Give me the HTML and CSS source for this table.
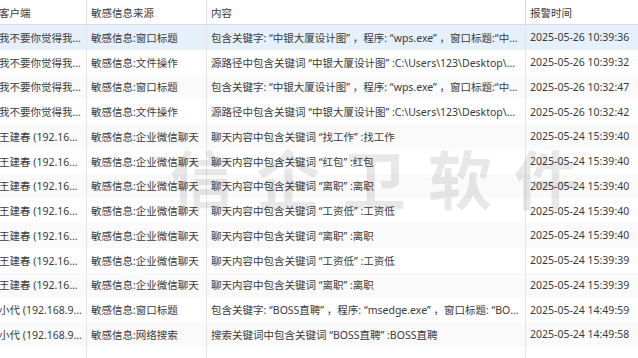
FILE: index.html
```html
<!DOCTYPE html>
<html lang="zh-CN">
<head>
  <meta charset="UTF-8">
  <meta name="viewport" content="width=device-width, initial-scale=1.0">
  <title>报警记录</title>
  <link rel="stylesheet" href="styles.css">
</head>
<body>
  <div id="kontener">
    <table id="lista">
      <colgroup>
        <col class="k-klient">
        <col class="k-zrodlo">
        <col class="k-tresc">
        <col class="k-czas">
      </colgroup>
      <thead>
        <tr>
          <th>客户端</th>
          <th>敏感信息来源</th>
          <th>内容</th>
          <th>报警时间</th>
        </tr>
      </thead>
      <tbody>
        <tr class="wybrany">
          <td>我不要你觉得我要我觉得</td>
          <td>敏感信息:窗口标题</td>
          <td>包含关键字: “中银大厦设计图” ，程序: “wps.exe” ，窗口标题:“中银大厦设计图.docx”</td>
          <td>2025-05-26 10:39:36</td>
        </tr>
        <tr>
          <td>我不要你觉得我要我觉得</td>
          <td>敏感信息:文件操作</td>
          <td>源路径中包含关键词 “中银大厦设计图” :C:\Users\123\Desktop\中银大厦设计图.docx</td>
          <td>2025-05-26 10:39:32</td>
        </tr>
        <tr>
          <td>我不要你觉得我要我觉得</td>
          <td>敏感信息:窗口标题</td>
          <td>包含关键字: “中银大厦设计图” ，程序: “wps.exe” ，窗口标题:“中银大厦设计图.docx”</td>
          <td>2025-05-26 10:32:47</td>
        </tr>
        <tr>
          <td>我不要你觉得我要我觉得</td>
          <td>敏感信息:文件操作</td>
          <td>源路径中包含关键词 “中银大厦设计图” :C:\Users\123\Desktop\中银大厦设计图.docx</td>
          <td>2025-05-26 10:32:42</td>
        </tr>
        <tr>
          <td>王建春 (192.168.1.25)</td>
          <td>敏感信息:企业微信聊天</td>
          <td>聊天内容中包含关键词 “找工作” :找工作</td>
          <td>2025-05-24 15:39:40</td>
        </tr>
        <tr>
          <td>王建春 (192.168.1.25)</td>
          <td>敏感信息:企业微信聊天</td>
          <td>聊天内容中包含关键词 “红包” :红包</td>
          <td>2025-05-24 15:39:40</td>
        </tr>
        <tr>
          <td>王建春 (192.168.1.25)</td>
          <td>敏感信息:企业微信聊天</td>
          <td>聊天内容中包含关键词 “离职” :离职</td>
          <td>2025-05-24 15:39:40</td>
        </tr>
        <tr>
          <td>王建春 (192.168.1.25)</td>
          <td>敏感信息:企业微信聊天</td>
          <td>聊天内容中包含关键词 “工资低” :工资低</td>
          <td>2025-05-24 15:39:40</td>
        </tr>
        <tr>
          <td>王建春 (192.168.1.25)</td>
          <td>敏感信息:企业微信聊天</td>
          <td>聊天内容中包含关键词 “离职” :离职</td>
          <td>2025-05-24 15:39:40</td>
        </tr>
        <tr>
          <td>王建春 (192.168.1.25)</td>
          <td>敏感信息:企业微信聊天</td>
          <td>聊天内容中包含关键词 “工资低” :工资低</td>
          <td>2025-05-24 15:39:39</td>
        </tr>
        <tr>
          <td>王建春 (192.168.1.25)</td>
          <td>敏感信息:企业微信聊天</td>
          <td>聊天内容中包含关键词 “离职” :离职</td>
          <td>2025-05-24 15:39:39</td>
        </tr>
        <tr>
          <td>小代 (192.168.9.12)</td>
          <td>敏感信息:窗口标题</td>
          <td>包含关键字: “BOSS直聘” ，程序: “msedge.exe” ，窗口标题: “BOSS直聘 - Microsoft Edge”</td>
          <td>2025-05-24 14:49:59</td>
        </tr>
        <tr>
          <td>小代 (192.168.9.12)</td>
          <td>敏感信息:网络搜索</td>
          <td>搜索关键词中包含关键词 “BOSS直聘” :BOSS直聘</td>
          <td>2025-05-24 14:49:58</td>
        </tr>
        <tr>
          <td></td>
          <td></td>
          <td></td>
          <td></td>
        </tr>
      </tbody>
    </table>
    <div id="znak-wodny">信企卫软件</div>
  </div>
</body>
</html>
```

FILE: styles.css
```css
:root {
  --tekst: #3a3a3a;
  --linia: #e4e4e4;
  --wybrany: #e5f0fb;
}
body {
  margin: 0;
  overflow: hidden;
  background-color: white;
  font-family: "Noto Sans", "Noto Sans CJK SC", sans-serif;
  font-size: 10.5px;
  color: var(--tekst);
}
#kontener {
  position: relative;
  width: 638px;
  height: 358px;
  overflow: hidden;
}
#lista {
  table-layout: fixed;
  border-collapse: separate;
  border-spacing: 0;
  width: 662px;
  margin-left: -5px;
}
.k-klient { width: 91px; }
.k-zrodlo { width: 120px; }
.k-tresc  { width: 319px; }
.k-czas   { width: 132px; }

#lista th,
#lista td {
  padding: 0 4px;
  white-space: nowrap;
  overflow: hidden;
  text-overflow: ellipsis;
  text-align: left;
  font-weight: normal;
}
#lista th {
  height: 24px;
  border-bottom: 1px solid #d9dee4;
}
#lista th + th {
  border-left: 1px solid #dcdcdc;
}
#lista td {
  height: 24.75px;
}
#lista td + td {
  border-left: 1px solid var(--linia);
}
#lista tbody tr:nth-child(odd) { background-color: #fafafa; }
#lista tbody tr.wybrany { background-color: var(--wybrany); }

#znak-wodny {
  position: absolute;
  left: 170px;
  top: 144px;
  font-size: 64px;
  font-weight: bold;
  letter-spacing: 22px;
  line-height: 1;
  color: rgba(0, 0, 0, 0.09);
  font-family: "Noto Sans CJK SC", sans-serif;
  pointer-events: none;
}
```
